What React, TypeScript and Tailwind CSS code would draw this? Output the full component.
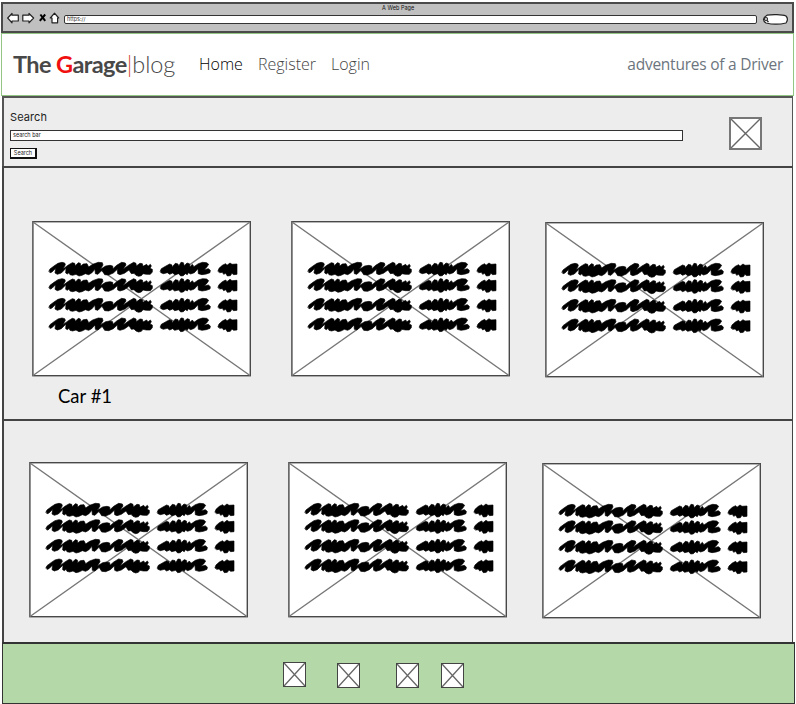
import React from "react";

function CrossBox({ className }: { className: string }) {
  return (
    <svg className={className} viewBox="0 0 100 100" preserveAspectRatio="none">
      <path d="M0 0L100 100M100 0L0 100" stroke="#666" strokeWidth="1.4" fill="none" vectorEffect="non-scaling-stroke" />
    </svg>
  );
}

const rows = [0, 49, 108, 167];

function Scribbles() {
  return (
    <g transform="scale(0.33333) translate(-36 -33)" fill="#000" stroke="#000" strokeWidth="2" strokeLinecap="round" strokeLinejoin="round">
      {rows.map((y) => (
        <g key={y} transform={`translate(0 ${y})`}>
          <path d="M87 183L90 177L102 168L114 160L126 157L134 159L136 164L129 177L145 165L157 158L164 160L166 167L175 158L181 160L182 168L190 162L201 161L206 171L218 163L235 157L247 158L249 165L241 178L257 168L270 166L278 168L279 176L290 166L305 157L316 159L318 165L309 178L327 165L341 157L348 160L349 168L360 160L367 161L369 169L380 163L384 169L391 163L394 168L390 175L397 178L397 186L391 193L379 193L369 191L364 197L356 199L348 196L342 190L334 191L327 180L313 190L300 194L293 191L292 178L280 189L266 195L254 194L246 181L234 193L226 191L225 178L215 189L206 194L196 191L186 196L177 198L168 193L158 196L150 194L147 188L142 192L137 189L138 175L124 189L112 193L105 189L107 175L96 186L91 188Z" />
          <path d="M421 183L424 176L438 168L449 162L456 165L456 172L466 160L474 162L476 169L483 157L490 158L493 167L501 159L508 161L510 170L517 163L522 170L535 161L548 157L560 158L566 163L560 172L552 179L565 176L571 181L570 188L559 192L546 194L535 191L534 176L523 188L512 192L505 188L502 194L496 191L490 197L482 198L476 191L464 194L458 189L449 193L442 188L430 191L423 188Z" />
          <path d="M594 183L597 175L607 166L617 161L621 166L630 159L636 163L651 162V193L641 194L636 190L631 197L622 198L617 190L611 193L607 187L600 188Z" />
        </g>
      ))}
    </g>
  );
}

function Card() {
  return (
    <svg className="block h-[156px] w-[219px] shrink-0" viewBox="0 0 219 156">
      <rect x="0.9" y="0.7" width="217.4" height="154" fill="#fff" stroke="#484848" strokeWidth="1.4" />
      <path d="M1 1L218 154.5M218 1L1 154.5" stroke="#777" strokeWidth="1.4" />
      <Scribbles />
    </svg>
  );
}

function BrowserBar() {
  return (
    <div className="ml-px mt-[2px] flex h-[31px] w-[793px] flex-col border-2 border-[#4a4a4a] bg-[#c0c0c0]">
      <div className="h-[7px] pl-[379px] font-['Inter',sans-serif] text-[5.5px] leading-[8px] tracking-[0.05px] text-[#111]">A Web Page</div>
      <div className="flex h-[14px] items-center">
        <svg className="ml-[4px] mt-px h-[14px] w-[53px]" viewBox="0 0 53 14" fill="#fff" stroke="#222" strokeWidth="1.2" strokeLinejoin="round">
          <path d="M0.7 6L5 1.5V3.2H11.3V9H5V10.8L0.7 6Z" />
          <path d="M26.6 6L22 1.5V3.2H15.8V9H22V10.8L26.6 6Z" />
          <path d="M33.4 2.5L38.2 8.8M38.2 2.5L32.8 8.8" strokeWidth="2" stroke="#000" />
          <path d="M47.5 1.2L51.7 6H50.6V10.8H45V6H43.3L47.5 1.2Z" />
        </svg>
        <div className="ml-[4px] mt-[2px] h-[9px] w-[693px] shrink-0 rounded-[2px] border-[1.5px] border-[#333] bg-white pl-[2px] font-['Inter',sans-serif] text-[5.5px] leading-[7px] text-[#333]">https://</div>
        <svg className="ml-[5px] mt-[2px] h-[11px] w-[27px] shrink-0" viewBox="0 0 27 11" fill="#fff" stroke="#222" strokeWidth="1.2">
          <path d="M5 1.2C10 0.3 20 0.3 24 2C25.8 4 25.5 7 24 9C18 10.4 9 10.2 4 9C0.5 6.5 0.5 4 5 1.2Z" />
          <circle cx="4" cy="5" r="1.5" />
          <path d="M5 6.5L6.5 8" />
        </svg>
      </div>
    </div>
  );
}

function NavBar() {
  return (
    <nav className="ml-px flex h-[63px] w-[793px] items-center border border-[#93c585] bg-white pb-px">
      <div className="ml-[11px] w-[186px] whitespace-nowrap font-['Lato',sans-serif] text-[23.5px] leading-[30px] text-[#484848]">
        <span className="font-bold tracking-[-0.6px]">The <span className="text-[#f01010]">G</span>arage</span>
        <span className="font-light text-[#d04030]">|</span>
        <span className="font-light tracking-[-0.1px]">blog</span>
      </div>
      <div className="flex font-['Open_Sans',sans-serif] text-[16px] font-light leading-[24px] text-[#444]">
        <span className="w-[59px] text-black">Home</span>
        <span className="w-[73px]">Register</span>
        <span>Login</span>
      </div>
      <div className="ml-auto mr-[10px] pb-px font-['Open_Sans',sans-serif] text-[15.5px] leading-[24px] tracking-[-0.24px] text-[#6c757d]">adventures of a Driver</div>
    </nav>
  );
}

function SearchPanel() {
  return (
    <section className="ml-[2px] flex h-[70px] w-[791px] border-l-2 border-r border-t-2 border-[#555] bg-[#ededed]">
      <div className="ml-[6px] w-[673px]">
        <div className="mt-[12px] font-['Inter',sans-serif] text-[11px] leading-[14px] tracking-[0.1px] text-[#222]">Search</div>
        <div className="mt-[6px] h-[11px] border-[1.5px] border-[#333] bg-white pl-[2px] font-['Inter',sans-serif] text-[5.5px] leading-[9px] text-[#222]">search bar</div>
        <button className="mt-[7px] block h-[11px] w-[27px] border border-b-2 border-r-2 border-[#111] bg-white text-center font-['Inter',sans-serif] text-[5.5px] leading-[8px] text-[#222]">Search</button>
      </div>
      <div className="ml-[46px] mt-[19px] h-[33px] w-[33px] border-2 border-[#777] bg-white">
        <CrossBox className="h-full w-full" />
      </div>
    </section>
  );
}

export default function App() {
  return (
    <div className="h-[704px] w-[796px] overflow-hidden bg-white">
      <BrowserBar />
      <NavBar />
      <SearchPanel />
      <section className="ml-[2px] h-[253px] w-[791px] border-l-2 border-r border-t-2 border-[#444] bg-[#ededed]">
        <div className="flex pl-[28px] pt-[53px]">
          <Card />
          <div className="ml-[40px]"><Card /></div>
          <div className="ml-[35px] mt-px"><Card /></div>
        </div>
        <div className="ml-[54px] mt-[6px] font-['Lato',sans-serif] text-[18.5px] leading-[24px] text-black">Car #1</div>
      </section>
      <section className="ml-[2px] h-[223px] w-[791px] border-l-2 border-r border-t-2 border-[#444] bg-[#ededed]">
        <div className="flex pl-[25px] pt-[41px]">
          <Card />
          <div className="ml-[40px]"><Card /></div>
          <div className="ml-[35px] mt-px"><Card /></div>
        </div>
      </section>
      <footer className="ml-[2px] flex h-[62px] w-[793px] border border-t-2 border-[#333] bg-[#b5d8a8]">
        <div className="ml-[280px] mt-[18px] h-[25px] w-[23px] border-[1.5px] border-[#444] bg-white"><CrossBox className="h-full w-full" /></div>
        <div className="ml-[31px] mt-[19px] h-[25px] w-[23px] border-[1.5px] border-[#444] bg-white"><CrossBox className="h-full w-full" /></div>
        <div className="ml-[36px] mt-[19px] h-[25px] w-[23px] border-[1.5px] border-[#444] bg-white"><CrossBox className="h-full w-full" /></div>
        <div className="ml-[22px] mt-[19px] h-[25px] w-[23px] border-[1.5px] border-[#444] bg-white"><CrossBox className="h-full w-full" /></div>
      </footer>
    </div>
  );
}
